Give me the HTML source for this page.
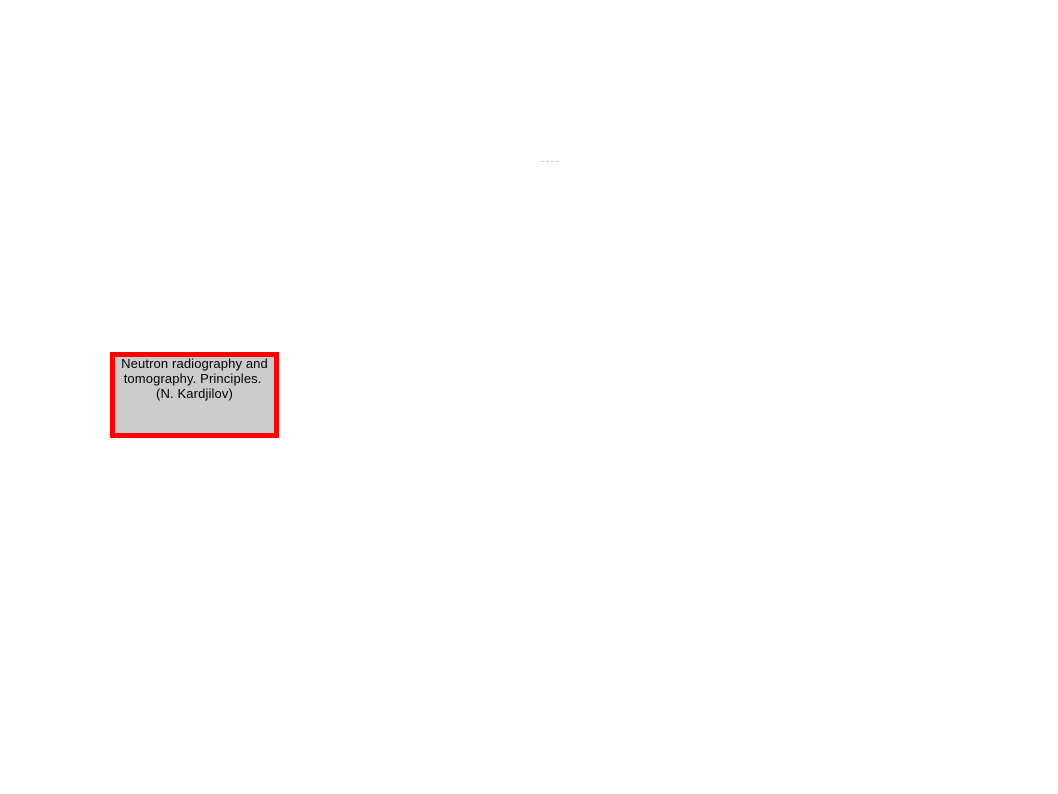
<!DOCTYPE html>
<html><head><style>
body{margin:0;width:1058px;height:794px;background:#fff;position:relative;overflow:hidden}
.box{position:absolute;left:110px;top:352px;width:159px;height:76px;border:5px solid #ff0000;background:#cbcbcb;font-family:"Liberation Sans",sans-serif;font-size:13px;line-height:15px;text-align:center;color:#000;letter-spacing:0.13px}
.box div{margin-top:-1px;white-space:nowrap}
</style></head><body>
<div style="position:absolute;left:541px;top:161px;width:18px;height:1px;border-top:1px dashed #ccc"></div>
<div class="box"><div>Neutron radiography and<br>tomography. Principles.&nbsp;<br>(N. Kardjilov)</div></div>
</body></html>
